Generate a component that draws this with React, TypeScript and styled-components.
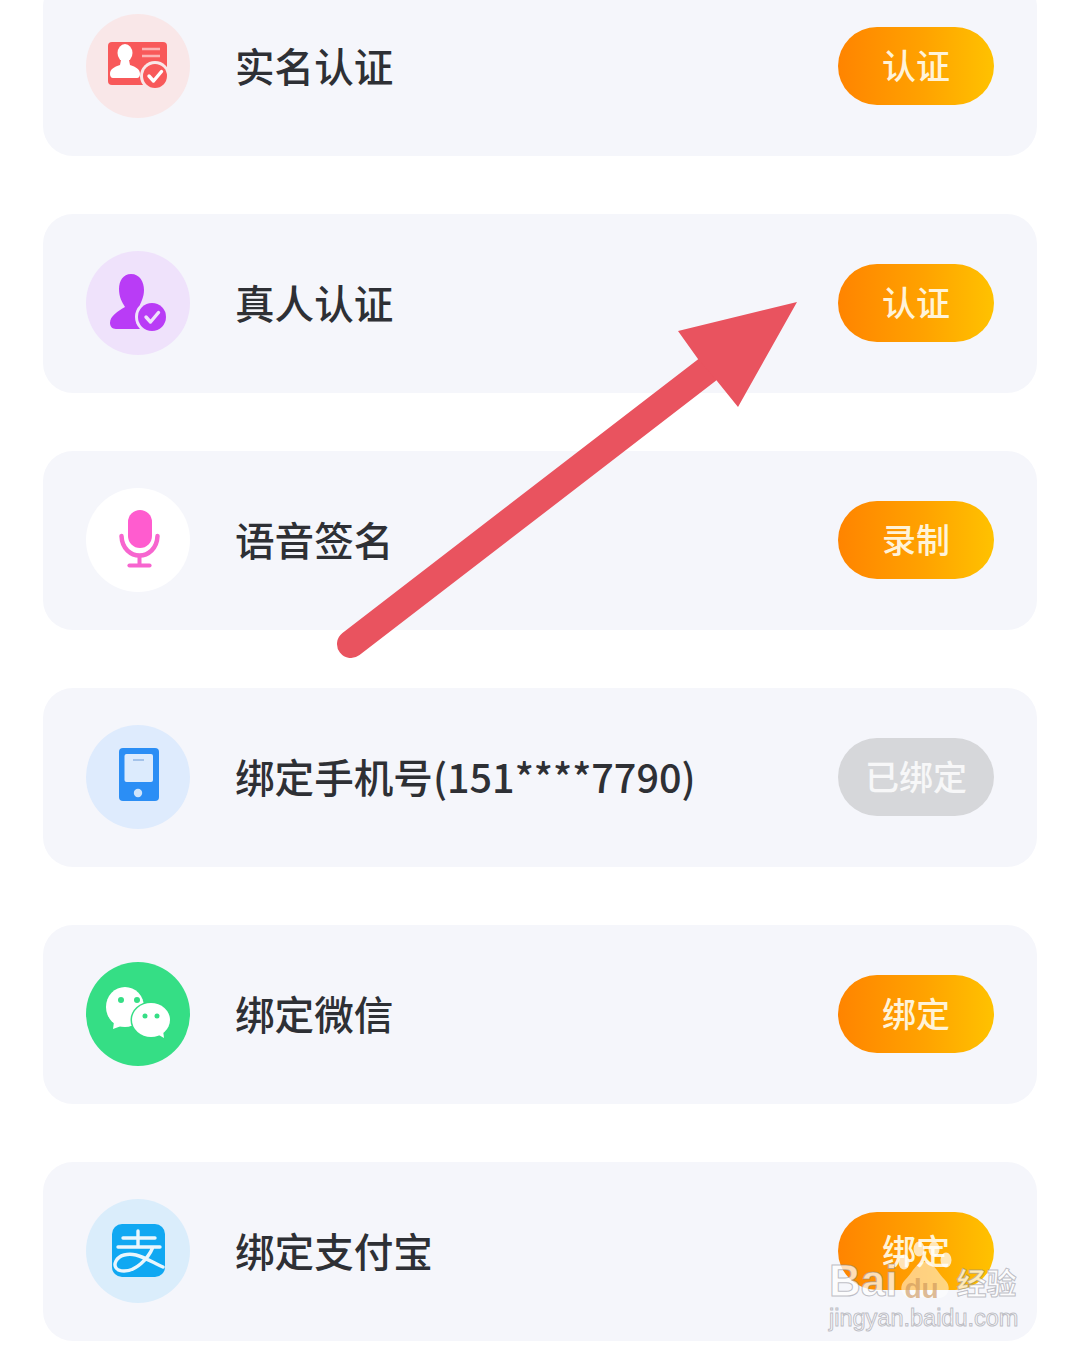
import { ReactNode } from "react";
import styled, { createGlobalStyle } from "styled-components";

const GlobalStyle = createGlobalStyle`
  html, body {
    margin: 0;
    background: #fff;
  }

  body {
    height: 1352px;
    overflow: hidden;
    font-family: "Noto Sans CJK SC", "Noto Sans", sans-serif;
  }
`;

const Page = styled.main`
  position: relative;
  width: 1080px;
  height: 1352px;
  overflow: hidden;
`;

// the list is scrolled, so the first card starts above the window
const List = styled.section`
  display: flex;
  flex-direction: column;
  gap: 58px;
  margin-top: -23px;
  padding: 0 43px;
`;

const Card = styled.div`
  display: flex;
  align-items: center;
  height: 179px;
  padding: 0 43px;
  border-radius: 30px;
  background: #f5f6fb;
`;

const IconCircle = styled.div<{ $bg: string }>`
  flex: none;
  width: 104px;
  height: 104px;
  margin-top: -1px;
  border-radius: 50%;
  background: ${(p) => p.$bg};

  svg {
    display: block;
  }
`;

const Label = styled.span`
  flex: 1;
  margin: -4px 0 0 45px;
  font-size: 39.6px;
  font-weight: 500;
  line-height: 1;
  color: #2e3035;
  white-space: nowrap;
`;

const ActionButton = styled.button<{ $done?: boolean }>`
  flex: none;
  width: 156px;
  height: 78px;
  margin-top: -1px;
  border: 0;
  border-radius: 39px;
  padding: 0 0 2px;
  font-family: inherit;
  font-size: 34px;
  font-weight: 500;
  line-height: 1;
  color: ${(p) => (p.$done ? "#f7f7f8" : "#fff3d8")};
  background: ${(p) =>
    p.$done ? "#d6d7da" : "linear-gradient(90deg, #ff8400 0%, #ffa200 55%, #ffc200 100%)"};
`;

const ArrowMark = styled.svg`
  position: absolute;
  left: 320px;
  top: 290px;
  width: 490px;
  height: 380px;
  pointer-events: none;
`;

const Watermark = styled.div`
  position: absolute;
  left: 829px;
  top: 1259px;
  width: 194px;
  color: rgba(255, 255, 255, 0.72);
  font-family: "Liberation Sans", Arial, sans-serif;
  -webkit-text-stroke: 1px rgba(130, 130, 140, 0.5);
`;

const MarkRow = styled.div`
  display: flex;
  align-items: center;
  height: 44px;
`;

const MarkWord = styled.span`
  font-size: 44px;
  font-weight: 700;
  line-height: 1;
`;

const Paw = styled.div`
  position: relative;
  flex: none;
  width: 60px;
  height: 44px;

  svg {
    position: absolute;
    left: 0;
    top: -19px;
  }
`;

const PawWord = styled.span`
  position: absolute;
  left: -12px;
  right: 0;
  top: 16px;
  text-align: center;
  font-size: 28px;
  font-weight: 700;
  line-height: 1;
  color: rgba(205, 150, 90, 0.65);
  -webkit-text-stroke: 0;
`;

const MarkCn = styled.span`
  font-family: "Noto Sans CJK SC", sans-serif;
  font-size: 30px;
  font-weight: 700;
  line-height: 1;
  margin-left: -1px;
  white-space: nowrap;
`;

const MarkUrl = styled.div`
  margin-top: 1px;
  font-size: 23.5px;
  line-height: 28px;
  white-space: nowrap;
`;

function CheckBadge({ cx, cy, r, ring, fill, tick }: { cx: number; cy: number; r: number; ring: string; fill: string; tick: string }) {
  return (
    <>
      <circle cx={cx} cy={cy} r={r + 3} fill={ring} />
      <circle cx={cx} cy={cy} r={r} fill={fill} />
      <path
        d={`M${cx - 6} ${cy} l4.5 5 l8 -9.5`}
        fill="none"
        stroke={tick}
        strokeWidth="3.4"
        strokeLinecap="round"
        strokeLinejoin="round"
      />
    </>
  );
}

function IdCardIcon() {
  return (
    <svg width="104" height="104" viewBox="0 0 104 104">
      <rect x="22" y="28" width="59" height="43" rx="4" fill="#f8595a" />
      <ellipse cx="39" cy="39" rx="7.5" ry="9" fill="#fff" />
      <path d="M35 46 L43 46 L44 51 C50 53 54 55 54 60 C54 62 53 64 51 64 L27 64 C25 64 24 62 24 60 C24 55 28 53 34 51 Z" fill="#fff" />
      <path d="M56 35 H74 M56 42 H74" stroke="#fbb4b4" strokeWidth="2.4" />
      <CheckBadge cx={69} cy={62} r={12} ring="#f9e7e8" fill="#f8595a" tick="#fff" />
    </svg>
  );
}

function PersonCheckIcon() {
  return (
    <svg width="104" height="104" viewBox="0 0 104 104">
      <path
        d="M45 23 C54 23 58 31 58 39 C58 46 55 51 54 54 C60 57 68 60 68 68 C68 74 64 78 58 78 L30 78 C26 78 24 75 24 72 C24 65 32 60 39 56 C36 51 33 46 33 38 C33 30 37 23 45 23 Z"
        fill="#b93cf6"
      />
      <CheckBadge cx={66} cy={66} r={14} ring="#efe2fb" fill="#b93cf6" tick="#efe2fb" />
    </svg>
  );
}

function MicIcon() {
  return (
    <svg width="104" height="104" viewBox="0 0 104 104">
      <rect x="42" y="22" width="24" height="38" rx="12" fill="#ff5ccf" />
      <path d="M35.500 48 C36 61 45 67.500 53.500 67.500 C62 67.500 71 61 71.500 48" fill="none" stroke="#f765cf" strokeWidth="4.500" strokeLinecap="round" />
      <path d="M53.500 68 V77" stroke="#f765cf" strokeWidth="4" />
      <path d="M43.500 77.500 H63.500" stroke="#f765cf" strokeWidth="4.200" strokeLinecap="round" />
    </svg>
  );
}

function PhoneIcon() {
  return (
    <svg width="104" height="104" viewBox="0 0 104 104">
      <rect x="33" y="23" width="40" height="53" rx="4" fill="#2b8ef5" />
      <rect x="38.500" y="29" width="28.500" height="28" rx="2" fill="#dcebfd" />
      <path d="M47 35 H58" stroke="#9dbfe8" strokeWidth="1.800" />
      <circle cx="52" cy="68" r="4.200" fill="#cfe4fb" />
    </svg>
  );
}

function WechatIcon() {
  return (
    <svg width="104" height="104" viewBox="0 0 104 104">
      <ellipse cx="39" cy="45" rx="19" ry="20" fill="#fff" />
      <path d="M28 60 L27 67 L38 63 Z" fill="#fff" />
      <ellipse cx="65" cy="58" rx="20.500" ry="18.500" fill="#35de85" />
      <ellipse cx="65" cy="58" rx="19" ry="17" fill="#fff" />
      <path d="M71 72 L78 76 L77 68 Z" fill="#fff" />
      <circle cx="35" cy="38" r="3" fill="#35de85" />
      <circle cx="51" cy="38" r="3" fill="#35de85" />
      <circle cx="59" cy="54" r="2.500" fill="#35de85" />
      <circle cx="71" cy="54" r="2.500" fill="#35de85" />
    </svg>
  );
}

function AlipayIcon() {
  return (
    <svg width="104" height="104" viewBox="0 0 104 104">
      <rect x="26" y="25" width="53" height="53" rx="10" fill="#10a8f2" />
      <path
        d="M37 39 H69 M52 32 V48 M32 48 H74 M67 48 C62 60 50 72 38 72 C31 72 27 68 30 62 C33 56 42 54 50 56 C58 58 68 64 77 68"
        fill="none"
        stroke="#eaf6fd"
        strokeWidth="3.400"
        strokeLinecap="round"
      />
    </svg>
  );
}

type Row = {
  label: string;
  action: string;
  done?: boolean;
  bg: string;
  icon: ReactNode;
};

const rows: Row[] = [
  { label: "实名认证", action: "认证", bg: "#f9e7e8", icon: <IdCardIcon /> },
  { label: "真人认证", action: "认证", bg: "#efe2fb", icon: <PersonCheckIcon /> },
  { label: "语音签名", action: "录制", bg: "#ffffff", icon: <MicIcon /> },
  { label: "绑定手机号(151****7790)", action: "已绑定", done: true, bg: "#deebfd", icon: <PhoneIcon /> },
  { label: "绑定微信", action: "绑定", bg: "#35de85", icon: <WechatIcon /> },
  { label: "绑定支付宝", action: "绑定", bg: "#daedfb", icon: <AlipayIcon /> },
];

export default function App() {
  return (
    <Page>
      <GlobalStyle />
      <List>
        {rows.map((row) => (
          <Card key={row.label}>
            <IconCircle $bg={row.bg}>{row.icon}</IconCircle>
            <Label>{row.label}</Label>
            <ActionButton $done={row.done}>{row.action}</ActionButton>
          </Card>
        ))}
      </List>

      <ArrowMark viewBox="320 290 490 380">
        <path d="M351 644 L707 370" stroke="#e9535f" strokeWidth="28" strokeLinecap="round" />
        <path d="M797 302 L678 331 L698 359 L717 381 L738 407 Z" fill="#e9535f" />
      </ArrowMark>

      <Watermark>
        <MarkRow>
          <MarkWord>Bai</MarkWord>
          <Paw>
            <svg width="60" height="60" viewBox="0 0 60 60">
              <ellipse cx="7" cy="22" rx="5.500" ry="7.500" fill="rgba(255,255,255,0.72)" />
              <ellipse cx="22" cy="9" rx="5.500" ry="7.500" fill="rgba(255,255,255,0.72)" />
              <ellipse cx="37" cy="9" rx="5.500" ry="7.500" fill="rgba(255,255,255,0.72)" />
              <ellipse cx="49" cy="20" rx="5.500" ry="7.500" fill="rgba(255,255,255,0.72)" />
              <path d="M28 22 C37 22 40 32 48 40 C56 48 50 59 40 58 C34 57 22 57 16 58 C6 59 0 48 8 40 C16 32 19 22 28 22 Z" fill="rgba(255,255,255,0.5)" />
            </svg>
            <PawWord>du</PawWord>
          </Paw>
          <MarkCn>经验</MarkCn>
        </MarkRow>
        <MarkUrl>jingyan.baidu.com</MarkUrl>
      </Watermark>
    </Page>
  );
}
